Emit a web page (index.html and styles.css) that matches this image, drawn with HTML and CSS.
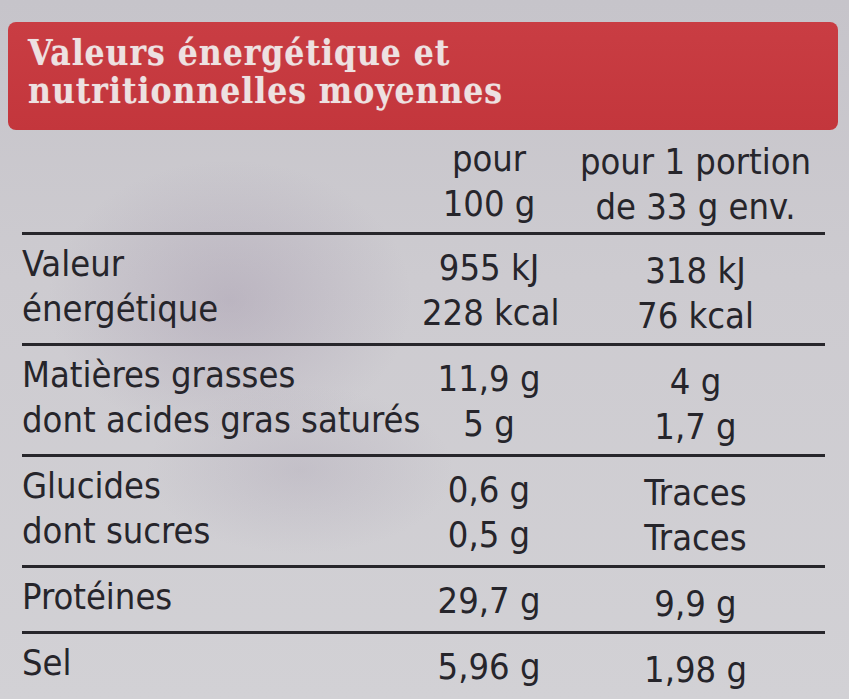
FILE: index.html
```html
<!DOCTYPE html>
<html lang="fr">
<head>
<meta charset="utf-8">
<link rel="stylesheet" href="styles.css">
</head>
<body>
<div class="page">
  <div class="banner">
    <div class="banner-title">Valeurs énergétique et<br>nutritionnelles moyennes</div>
  </div>
  <div class="table">
    <div class="group head">
      <div class="c1"></div>
      <div class="c2"><span>pour</span><span>100 g</span></div>
      <div class="c3"><span>pour 1 portion</span><span>de 33 g env.</span></div>
    </div>
    <div class="group">
      <div class="c1"><span>Valeur</span><span>énergétique</span></div>
      <div class="c2"><span>955 kJ</span><span>228 kcal</span></div>
      <div class="c3"><span>318 kJ</span><span>76 kcal</span></div>
    </div>
    <div class="group">
      <div class="c1"><span>Matières grasses</span><span>dont acides gras saturés</span></div>
      <div class="c2"><span>11,9 g</span><span>5 g</span></div>
      <div class="c3"><span>4 g</span><span>1,7 g</span></div>
    </div>
    <div class="group">
      <div class="c1"><span>Glucides</span><span>dont sucres</span></div>
      <div class="c2"><span>0,6 g</span><span>0,5 g</span></div>
      <div class="c3"><span>Traces</span><span>Traces</span></div>
    </div>
    <div class="group">
      <div class="c1"><span>Protéines</span></div>
      <div class="c2"><span>29,7 g</span></div>
      <div class="c3"><span>9,9 g</span></div>
    </div>
    <div class="group last">
      <div class="c1"><span>Sel</span></div>
      <div class="c2"><span>5,96 g</span></div>
      <div class="c3"><span>1,98 g</span></div>
    </div>
  </div>
</div>
</body>
</html>
```
FILE: styles.css
```css
html, body {
  margin: 0;
  padding: 0;
}
body {
  width: 849px;
  height: 699px;
  overflow: hidden;
  background:
    radial-gradient(ellipse 260px 200px at 230px 300px, rgba(150,135,160,0.33), rgba(150,135,160,0) 70%),
    radial-gradient(ellipse 220px 120px at 300px 470px, rgba(160,150,170,0.25), rgba(160,150,170,0) 70%),
    linear-gradient(180deg, #c6c4ca 0%, #cdcbd0 40%, #d2d1d5 100%);
}
.page {
  padding-top: 22px;
}
.banner {
  margin-left: 8px;
  width: 830px;
  height: 108px;
  box-sizing: border-box;
  background: linear-gradient(180deg, #c93d43 0%, #c3363c 100%);
  border-radius: 8px;
  padding: 12px 0 0 20px;
}
.banner-title {
  font-family: "DejaVu Serif", serif;
  font-stretch: condensed;
  font-weight: bold;
  font-size: 35px;
  line-height: 38px;
  letter-spacing: 1px;
  color: #ede1e1;
  text-shadow: 0 0 1px rgba(255,255,255,0.4);
}
.table {
  margin: 5px 0 0 22px;
  width: 803px;
  font-family: "DejaVu Sans", sans-serif;
  font-stretch: condensed;
  font-size: 36px;
  line-height: 45px;
  color: #26252b;
}
.group {
  display: grid;
  grid-template-columns: 400px 134px 269px;
  padding: 9px 0;
  border-bottom: 3px solid #27262b;
}
.group.head {
  padding: 0 0 7px;
}
.group.last {
  border-bottom: none;
}
.group span {
  display: block;
  white-space: nowrap;
}
.c1 {
  margin: -3px 0 3px;
}
.c2 {
  text-align: center;
  margin: 1px 0 -1px;
}
.c3 {
  text-align: center;
  padding-left: 10px;
  margin: 4px 0 -4px;
}
```
